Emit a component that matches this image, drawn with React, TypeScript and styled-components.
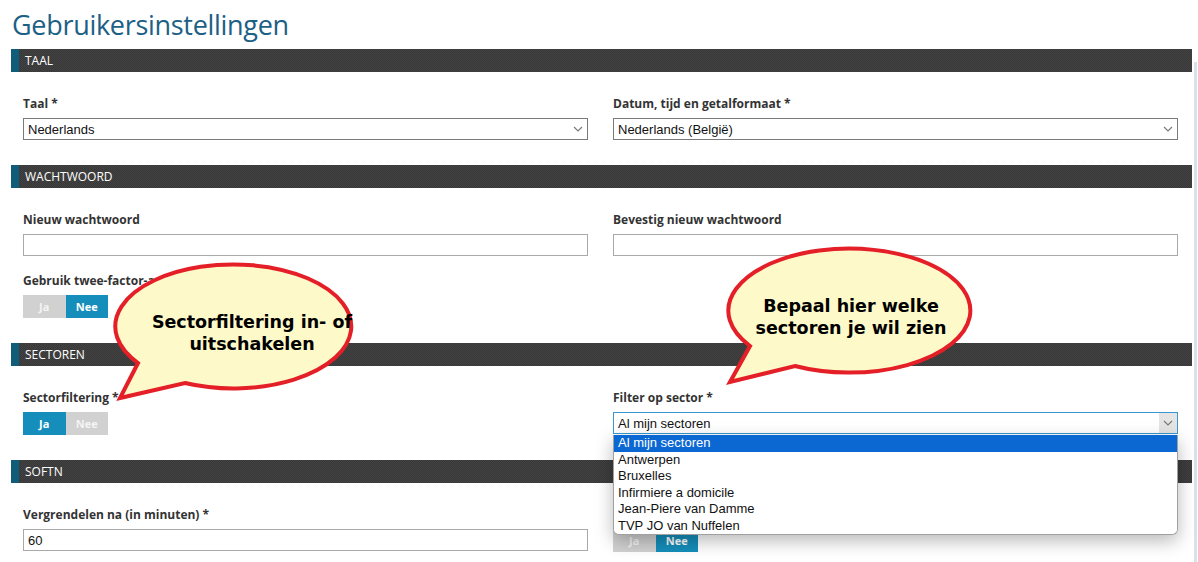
import React from 'react';
import styled, { createGlobalStyle } from 'styled-components';

const GlobalStyle = createGlobalStyle`
  html, body {
    margin: 0;
    padding: 0;
    background: #ffffff;
  }
  body {
    font-family: 'Open Sans', 'Noto Sans', sans-serif;
    color: #333333;
  }
  * {
    box-sizing: border-box;
  }
`;

const Page = styled.div`
  position: relative;
  display: flex;
  width: 1198px;
  height: 562px;
  overflow: hidden;
`;

const Main = styled.main`
  flex: 1;
  margin-left: 11px;
`;

const ScrollTrack = styled.div`
  width: 6px;
  padding-top: 62px;
  display: flex;
  justify-content: flex-end;
  padding-right: 1px;

  &::after {
    content: '';
    display: block;
    width: 3px;
    height: 100%;
    background: #d9e1ea;
  }
`;

const Title = styled.h1`
  margin: 0;
  height: 49px;
  padding-left: 1px;
  font-size: 27px;
  line-height: 49px;
  font-weight: 400;
  color: #1d6085;
  letter-spacing: -0.3px;
`;

const SectionBar = styled.div`
  height: 23px;
  border-left: 8px solid #0f5d78;
  padding-left: 6px;
  font-size: 12px;
  line-height: 24px;
  color: #ffffff;
  text-transform: uppercase;
  background-color: #3c3c3c;
  background-image: repeating-conic-gradient(#434343 0 25%, #373737 0 50%);
  background-size: 2px 2px;
`;

const SectionBody = styled.div`
  display: grid;
  grid-template-columns: 1fr 1fr;
  column-gap: 25px;
  row-gap: 17px;
  padding: 24px 14px 25px 12px;
`;

const Field = styled.div`
  position: relative;
  display: flex;
  flex-direction: column;
  align-items: flex-start;
`;

const Label = styled.label`
  display: block;
  font-size: 12px;
  line-height: 16px;
  min-height: 16px;
  font-weight: 700;
  color: #333333;
  margin-bottom: 6px;
`;

const SelectBox = styled.div<{ $focused?: boolean }>`
  width: 100%;
  height: 22px;
  display: flex;
  align-items: center;
  justify-content: space-between;
  border: 1px solid ${({ $focused }) => ($focused ? '#3997cf' : '#7a7a7a')};
  background: #ffffff;
  font-family: 'Liberation Sans', Arial, sans-serif;
  font-size: 13px;
  color: #111111;
  padding-left: 4px;
`;

const Arrow = styled.span<{ $focused?: boolean }>`
  width: 18px;
  height: 100%;
  display: flex;
  align-items: center;
  justify-content: center;
  background: ${({ $focused }) => ($focused ? '#e4e4e4' : 'transparent')};
  color: #7a7a7a;
`;

const TextInput = styled.input`
  width: 100%;
  height: 22px;
  border: 1px solid #a9a9a9;
  padding: 0 4px;
  font-family: 'Liberation Sans', Arial, sans-serif;
  font-size: 13px;
  color: #111111;
  outline: none;
`;

const Toggle = styled.div`
  display: inline-flex;
  height: 23px;
`;

const ToggleButton = styled.button<{ $active?: boolean }>`
  width: 42.5px;
  height: 23px;
  border: none;
  padding: 0;
  font-family: 'Open Sans', 'Noto Sans', sans-serif;
  font-size: 11px;
  font-weight: 700;
  color: ${({ $active }) => ($active ? '#ffffff' : '#f4f4f4')};
  background: ${({ $active }) => ($active ? '#158ebb' : '#d1d1d1')};
`;

const OptionList = styled.ul`
  position: absolute;
  top: 100%;
  left: 0;
  right: 0;
  margin: 0;
  padding: 0;
  list-style: none;
  background: #ffffff;
  border: 1px solid #a0a0a0;
  border-top: none;
  border-radius: 0 0 6px 6px;
  box-shadow: 0 6px 18px rgba(0, 0, 0, 0.28);
  z-index: 5;
  overflow: hidden;
`;

const Option = styled.li<{ $selected?: boolean }>`
  height: 16.5px;
  line-height: 16.5px;
  padding-left: 4px;
  font-family: 'Liberation Sans', Arial, sans-serif;
  font-size: 13px;
  color: ${({ $selected }) => ($selected ? '#ffffff' : '#111111')};
  background: ${({ $selected }) => ($selected ? '#0b67d2' : '#ffffff')};
`;

const Bubble = styled.div<{ $x: number; $y: number }>`
  position: absolute;
  left: ${({ $x }) => $x}px;
  top: ${({ $y }) => $y}px;
  width: 270px;
  height: 150px;
  z-index: 10;

  svg {
    position: absolute;
    inset: 0;
  }
`;

const BubbleText = styled.div<{ $cx: number; $cy: number }>`
  position: absolute;
  left: ${({ $cx }) => $cx - 130}px;
  top: ${({ $cy }) => $cy - 22}px;
  width: 260px;
  text-align: center;
  font-family: 'DejaVu Sans', Verdana, sans-serif;
  font-weight: 700;
  font-size: 17.5px;
  line-height: 22px;
  color: #000000;
`;

const Chevron = () => (
  <svg width="10" height="6" viewBox="0 0 10 6" fill="none">
    <path d="M1 1l4 4 4-4" stroke="currentColor" strokeWidth="1.2" />
  </svg>
);

const Select = ({ value, focused }: { value: string; focused?: boolean }) => (
  <SelectBox $focused={focused}>
    <span>{value}</span>
    <Arrow $focused={focused}>
      <Chevron />
    </Arrow>
  </SelectBox>
);

const JaNee = ({ ja }: { ja: boolean }) => (
  <Toggle>
    <ToggleButton $active={ja}>Ja</ToggleButton>
    <ToggleButton $active={!ja}>Nee</ToggleButton>
  </Toggle>
);

const sectors = [
  'Al mijn sectoren',
  'Antwerpen',
  'Bruxelles',
  'Infirmiere a domicile',
  'Jean-Piere van Damme',
  'TVP JO van Nuffelen',
];

const SpeechBubble = ({
  x,
  y,
  path,
  cx,
  cy,
  lines,
}: {
  x: number;
  y: number;
  path: string;
  cx: number;
  cy: number;
  lines: string[];
}) => (
  <Bubble $x={x} $y={y}>
    <svg width="270" height="150" viewBox="0 0 270 150">
      <path d={path} fill="#fdf9c9" stroke="#e41f27" strokeWidth="4" strokeLinejoin="miter" />
    </svg>
    <BubbleText $cx={cx} $cy={cy}>
      {lines.map((l) => (
        <div key={l}>{l}</div>
      ))}
    </BubbleText>
  </Bubble>
);

const App = () => (
  <Page>
    <GlobalStyle />
    <Main>
      <Title>Gebruikersinstellingen</Title>

      <SectionBar>Taal</SectionBar>
      <SectionBody>
        <Field>
          <Label>Taal *</Label>
          <Select value="Nederlands" />
        </Field>
        <Field>
          <Label>Datum, tijd en getalformaat *</Label>
          <Select value="Nederlands (België)" />
        </Field>
      </SectionBody>

      <SectionBar>Wachtwoord</SectionBar>
      <SectionBody>
        <Field>
          <Label>Nieuw wachtwoord</Label>
          <TextInput type="password" />
        </Field>
        <Field>
          <Label>Bevestig nieuw wachtwoord</Label>
          <TextInput type="password" />
        </Field>
        <Field>
          <Label>Gebruik twee-factor-authenticatie</Label>
          <JaNee ja={false} />
        </Field>
      </SectionBody>

      <SectionBar>Sectoren</SectionBar>
      <SectionBody>
        <Field>
          <Label>Sectorfiltering *</Label>
          <JaNee ja />
        </Field>
        <Field>
          <Label>Filter op sector *</Label>
          <Select value="Al mijn sectoren" focused />
          <OptionList>
            {sectors.map((s, i) => (
              <Option key={s} $selected={i === 0}>
                {s}
              </Option>
            ))}
          </OptionList>
        </Field>
      </SectionBody>

      <SectionBar>Softn</SectionBar>
      <SectionBody>
        <Field>
          <Label>Vergrendelen na (in minuten) *</Label>
          <TextInput defaultValue="60" />
        </Field>
        <Field>
          <Label>{'\u00a0'}</Label>
          <JaNee ja={false} />
        </Field>
      </SectionBody>
    </Main>
    <ScrollTrack />

    <SpeechBubble
      x={110}
      y={255}
      path="M 28 108 A 118 62 0 1 1 75 128 L 10 143 Z"
      cx={142}
      cy={78}
      lines={['Sectorfiltering in- of', 'uitschakelen']}
    />
    <SpeechBubble
      x={715}
      y={240}
      path="M 35 106 A 121 62 0 1 1 80 126 L 15 142 Z"
      cx={136}
      cy={77}
      lines={['Bepaal hier welke', 'sectoren je wil zien']}
    />
  </Page>
);

export default App;
